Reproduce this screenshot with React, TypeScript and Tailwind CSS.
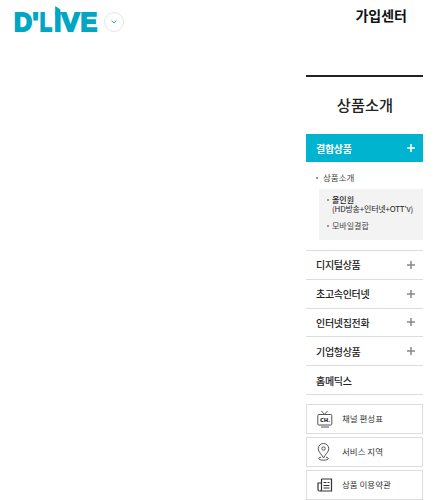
import React from "react";

const menus = [
  { title: "디지털상품", more: true },
  { title: "초고속인터넷", more: true },
  { title: "인터넷집전화", more: true },
  { title: "기업형상품", more: true },
  { title: "홈메딕스", more: false },
];

function Plus({ className }: { className: string }) {
  return (
    <svg viewBox="0 0 8 8" className={`h-2 w-2 ${className}`}>
      <path d="M4 0v8M0 4h8" stroke="currentColor" strokeWidth="1.5" />
    </svg>
  );
}

function Logo() {
  return (
    <svg
      viewBox="0 0 84 28"
      className="h-7 w-[84px] shrink-0 overflow-visible fill-[#00a6c4] stroke-[#00a6c4] font-['Liberation_Sans',sans-serif] text-[25px] font-bold"
      strokeWidth="1.8"
    >
      <text x="0 18.500" y="25">D'</text>
      <text x="25.800" y="25" textLength="12.300" lengthAdjust="spacingAndGlyphs">L</text>
      <text x="40.300" y="25">I</text>
      <text x="47.300" y="25" textLength="18.300" lengthAdjust="spacingAndGlyphs">V</text>
      <text x="66.500" y="25">E</text>
      {/* Raised tip of the I */}
      <path d="M41.200 0l5.200 3.500V9h-5.200z" stroke="none" />
    </svg>
  );
}

function TvIcon() {
  return (
    <svg viewBox="0 0 16 18" className="h-[18px] w-4" fill="none" stroke="#555">
      <path d="M4.500 1l3 3.500 3-3.500M4 17h8" />
      <rect x="0.8" y="4.500" width="14" height="10.500" rx="1" />
      <text
        x="3"
        y="11.700"
        textLength="10"
        lengthAdjust="spacingAndGlyphs"
        fill="#333"
        stroke="none"
        className="font-['Open_Sans',sans-serif] text-[5px] font-extrabold"
      >
        CH.
      </text>
    </svg>
  );
}

function PinIcon() {
  return (
    <svg viewBox="0 0 16 18" className="h-[18px] w-4" fill="none" stroke="#555">
      <path d="M6.500 15C5 11.500 1.200 9 1.200 5.800a5.300 5.300 0 0 1 10.600 0C11.800 9 8 11.500 6.500 15z" />
      <circle cx="6.500" cy="5.500" r="1.700" />
      <path d="M4 14.200c-4 .5-2.500 3 2.500 3s6.500-2.500 2.500-3" />
    </svg>
  );
}

function NewsIcon() {
  return (
    <svg viewBox="0 0 16 18" className="h-[18px] w-4" fill="none" stroke="#333">
      <path d="M4.500 3h10v12h-12Q1 15 1 13.500V7h3.500M4.500 3v10.500Q4.500 15 3 15" strokeWidth="1.200" />
      <path d="M6.500 6.500h3M6.500 9.500h6M6.500 12h6M10.500 6.500h2" />
    </svg>
  );
}

const links = [
  { title: "채널 편성표", icon: <TvIcon /> },
  { title: "서비스 지역", icon: <PinIcon /> },
  { title: "상품 이용약관", icon: <NewsIcon /> },
];

export default function App() {
  return (
    <div className="h-[500px] w-[448px] overflow-hidden bg-white font-['Noto_Sans_CJK_KR',sans-serif] text-[#333]">
      {/* Header */}
      <header className="flex h-[75px] items-start pl-3.5 pr-[41px] pt-[6px]">
        <Logo />
        <button className="ml-1.5 mt-1.5 flex h-5 w-5 items-center justify-center rounded-full border border-[#e5e5e5]">
          <svg viewBox="0 0 6 4" className="h-1 w-1.5" fill="none" stroke="#30aec8">
            <path d="M.5.500L3 3 5.500.500" />
          </svg>
        </button>
        <h1 className="ml-auto whitespace-nowrap text-[14px] font-bold leading-[18px] text-[#111]">
          가입센터
        </h1>
      </header>

      {/* Side menu */}
      <aside className="ml-[306px] w-[117px]">
        <h2 className="h-[59px] border-t-2 border-[#222] pl-px text-center text-[15.300px] font-medium leading-[55px] text-[#222]">
          상품소개
        </h2>
        <div className="flex h-7 items-center justify-between bg-[#00b4d0] pl-2.5 pr-2 text-[10px] font-bold tracking-[-0.3px] text-white">
          결합상품
          <Plus className="text-white" />
        </div>
        <div className="h-[89px] border-b border-[#ddd] pt-2">
          <p className="flex h-[15px] items-center gap-[5px] pl-2.5 text-[8.500px] text-[#444]">
            <span className="h-0.5 w-0.5 rounded-full bg-[#777]" />
            상품소개
          </p>
          <ul className="ml-[13px] mt-1 h-[51px] bg-[#f3f3f3] pl-2 pt-[6px] text-[8px] leading-[9px]">
            <li className="flex gap-[3px]">
              <span className="mt-1 h-0.5 w-0.5 shrink-0 rounded-full bg-[#777]" />
              <div className="whitespace-nowrap text-[#222]">
                <p className="h-[9px] font-medium">올인원</p>
                <p className="h-[9px] tracking-[-0.2px]">(HD방송+인터넷+OTT'v)</p>
              </div>
            </li>
            <li className="mt-2 flex gap-[3px] text-[#444]">
              <span className="mt-1 h-0.5 w-0.5 shrink-0 rounded-full bg-[#777]" />
              모바일결합
            </li>
          </ul>
        </div>
        <ul>
          {menus.map((menu) => (
            <li
              key={menu.title}
              className="flex h-[28.800px] items-center justify-between border-b border-[#ddd] pl-2.5 pr-2 text-[10px] font-medium tracking-[-0.300px] text-[#222]"
            >
              {menu.title}
              {menu.more && <Plus className="text-[#888]" />}
            </li>
          ))}
        </ul>

        {/* Quick links */}
        <div className="mt-[9px] flex flex-col gap-[3px]">
          {links.map((link) => (
            <a key={link.title} className="flex h-[30px] items-center gap-[9px] border border-[#ddd] pl-2.5 text-[8.500px] text-[#333]">
              {link.icon}
              <span className="pb-px">{link.title}</span>
            </a>
          ))}
        </div>
      </aside>
    </div>
  );
}
